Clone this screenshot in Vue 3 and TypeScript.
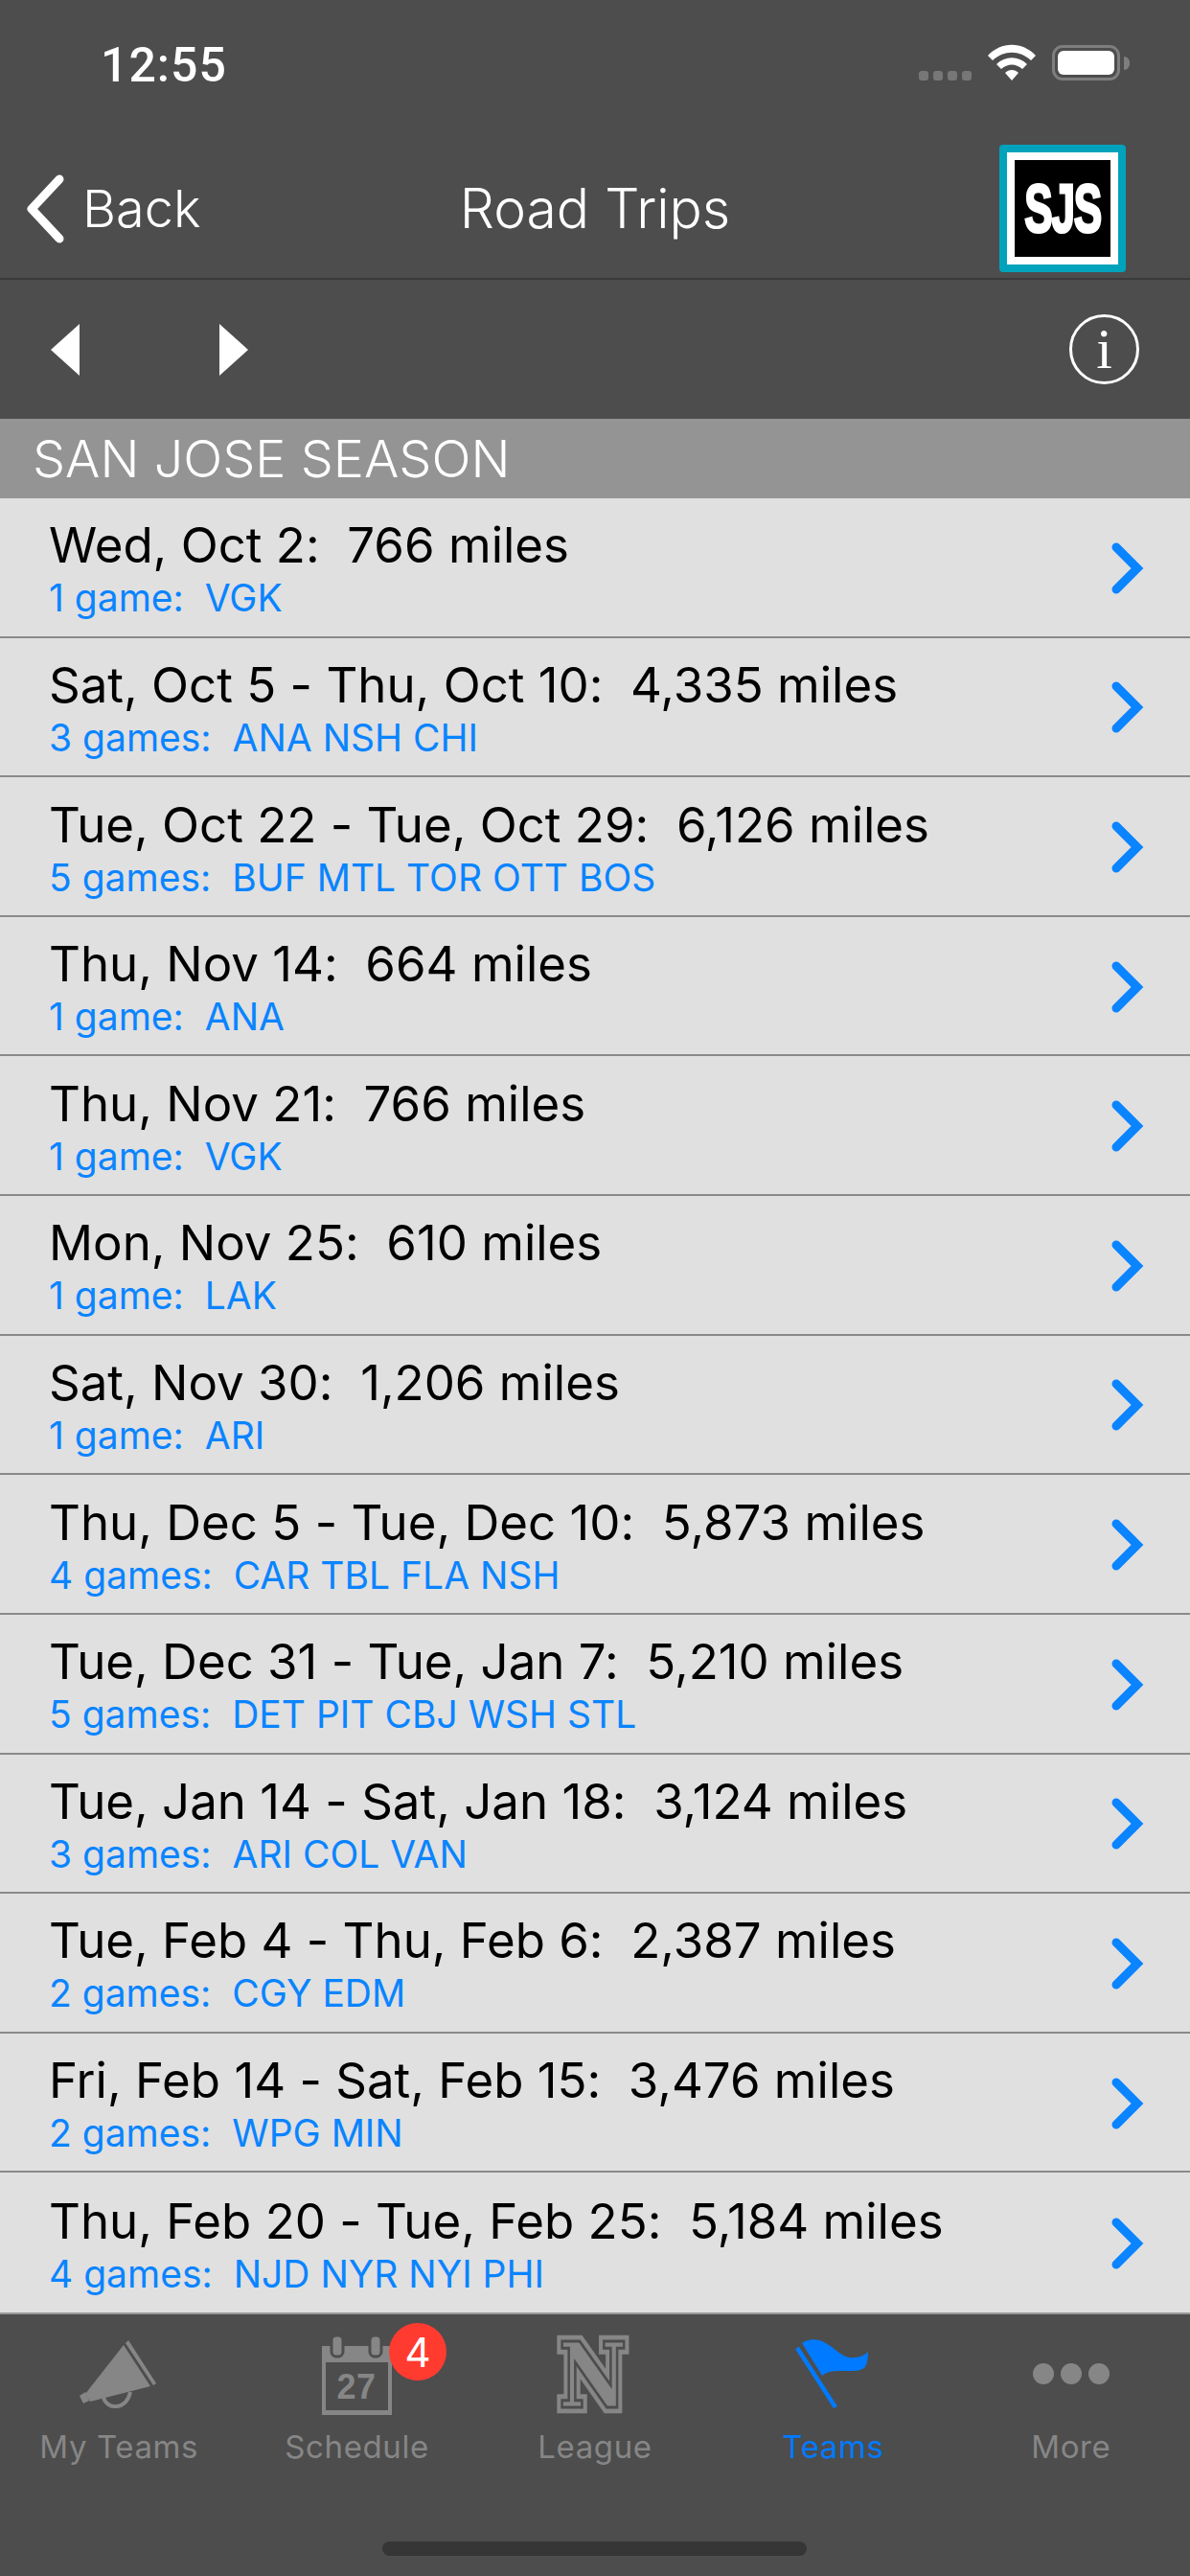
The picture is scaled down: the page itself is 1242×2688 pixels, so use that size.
<script setup lang="ts">
interface Trip {
  title: string;
  sub: string;
}

const trips: Trip[] = [
  { title: 'Wed, Oct 2:  766 miles', sub: '1 game:  VGK' },
  { title: 'Sat, Oct 5 - Thu, Oct 10:  4,335 miles', sub: '3 games:  ANA NSH CHI' },
  { title: 'Tue, Oct 22 - Tue, Oct 29:  6,126 miles', sub: '5 games:  BUF MTL TOR OTT BOS' },
  { title: 'Thu, Nov 14:  664 miles', sub: '1 game:  ANA' },
  { title: 'Thu, Nov 21:  766 miles', sub: '1 game:  VGK' },
  { title: 'Mon, Nov 25:  610 miles', sub: '1 game:  LAK' },
  { title: 'Sat, Nov 30:  1,206 miles', sub: '1 game:  ARI' },
  { title: 'Thu, Dec 5 - Tue, Dec 10:  5,873 miles', sub: '4 games:  CAR TBL FLA NSH' },
  { title: 'Tue, Dec 31 - Tue, Jan 7:  5,210 miles', sub: '5 games:  DET PIT CBJ WSH STL' },
  { title: 'Tue, Jan 14 - Sat, Jan 18:  3,124 miles', sub: '3 games:  ARI COL VAN' },
  { title: 'Tue, Feb 4 - Thu, Feb 6:  2,387 miles', sub: '2 games:  CGY EDM' },
  { title: 'Fri, Feb 14 - Sat, Feb 15:  3,476 miles', sub: '2 games:  WPG MIN' },
  { title: 'Thu, Feb 20 - Tue, Feb 25:  5,184 miles', sub: '4 games:  NJD NYR NYI PHI' },
];
</script>

<template>
  <div class="phone">
    <header class="status">
      <span class="time">12:55</span>
      <div class="status-icons">
        <div class="signal"><i></i><i></i><i></i><i></i></div>
        <svg class="wifi" width="50" height="38" viewBox="0 0 50 38">
          <path d="M0 12 C14 -3 36 -3 50 12 L45 17 C33 6 17 6 5 17 Z" fill="#fff" />
          <path d="M9 21 C18 12 32 12 41 21 L36 26 C29 20 21 20 14 26 Z" fill="#fff" />
          <path d="M18 30 C22 26 28 26 32 30 L25 38 Z" fill="#fff" />
        </svg>
        <div class="battery"><div class="battery-fill"></div></div>
        <div class="battery-cap"></div>
      </div>
    </header>

    <nav class="navbar">
      <div class="back">
        <svg width="44" height="74" viewBox="0 0 44 74">
          <path d="M36 6 L7 37 L36 68" fill="none" stroke="#fff" stroke-width="9" stroke-linecap="round" stroke-linejoin="round" />
        </svg>
        <span>Back</span>
      </div>
      <div class="title">Road Trips</div>
      <div class="logo"><div class="logo-inner"><span>SJS</span></div></div>
    </nav>

    <div class="toolbar">
      <div class="arrows">
        <svg width="30" height="54" viewBox="0 0 30 54"><path d="M30 0 V54 L0 27 Z" fill="#fff" /></svg>
        <svg width="30" height="54" viewBox="0 0 30 54"><path d="M0 0 V54 L30 27 Z" fill="#fff" /></svg>
      </div>
      <div class="info">i</div>
    </div>

    <div class="section">SAN JOSE SEASON</div>

    <ul class="list">
      <li v-for="trip in trips" :key="trip.title" class="row">
        <div class="row-text">
          <div class="row-title">{{ trip.title }}</div>
          <div class="row-sub">{{ trip.sub }}</div>
        </div>
        <svg class="chev" width="36" height="56" viewBox="0 0 36 56">
          <path d="M6 6 L28 28 L6 50" fill="none" stroke="#0a84ff" stroke-width="9" stroke-linecap="round" stroke-linejoin="miter" />
        </svg>
      </li>
    </ul>

    <footer class="tabbar">
      <div class="tab">
        <svg class="tab-icon" width="110" height="90" viewBox="70 2430 110 90">
          <path d="M90 2497 L130 2446 L158 2489 L95 2505 Z" fill="#868686" />
          <path d="M132 2444 L135 2441 L164 2486 L161 2488 Z" fill="#868686" />
          <path d="M84 2499 L90 2495 L94 2504 L88 2507 Z" fill="#868686" />
          <path d="M109 2501 C113 2514 133 2514 137 2495" fill="none" stroke="#868686" stroke-width="4" />
        </svg>
        <span>My Teams</span>
      </div>
      <div class="tab">
        <svg class="tab-icon" width="110" height="90" viewBox="318 2430 110 90">
          <path d="M336 2447 H409 V2519 H336 Z M340 2464 V2514 H405 V2464 Z" fill="#868686" fill-rule="evenodd" />
          <rect x="346" y="2436" width="12" height="22" rx="5" fill="#868686" stroke="#4d4d4d" stroke-width="3" />
          <rect x="386" y="2436" width="12" height="22" rx="5" fill="#868686" stroke="#4d4d4d" stroke-width="3" />
          <text x="372" y="2502" text-anchor="middle" class="cal-num">27</text>
        </svg>
        <span>Schedule</span>
        <div class="badge">4</div>
      </div>
      <div class="tab">
        <svg class="tab-icon" width="110" height="90" viewBox="566 2430 110 90">
          <defs>
            <text id="league-n" x="0" y="0" text-anchor="middle" class="league-n">N</text>
          </defs>
          <g transform="translate(619 2510) scale(1 1.2)">
            <use href="#league-n" fill="#868686" stroke="#868686" stroke-width="12" />
            <use href="#league-n" fill="#4d4d4d" stroke="#4d4d4d" stroke-width="4" />
            <use href="#league-n" fill="#868686" stroke="#4d4d4d" stroke-width="1" />
          </g>
        </svg>
        <span>League</span>
      </div>
      <div class="tab active">
        <svg class="tab-icon" width="110" height="90" viewBox="814 2430 110 90">
          <path d="M837 2444 C842 2440 850 2439 858 2442 C870 2447 877 2458 887 2459 C895 2460 902 2457 906 2453 C906 2461 905 2466 902 2470 C895 2474 890 2473 883 2473 C875 2473 865 2472 858 2478 Z" fill="#007aff" />
          <path d="M832 2449 L872 2511" fill="none" stroke="#007aff" stroke-width="4.5" />
        </svg>
        <span>Teams</span>
      </div>
      <div class="tab">
        <svg class="tab-icon" width="110" height="90" viewBox="1061 2430 110 90">
          <circle cx="1087" cy="2476" r="11" fill="#868686" />
          <circle cx="1116" cy="2476" r="11" fill="#868686" />
          <circle cx="1145" cy="2476" r="11" fill="#868686" />
        </svg>
        <span>More</span>
      </div>
      <div class="home-bar"></div>
    </footer>
  </div>
</template>

<style>
html,
body {
  margin: 0;
  background: #4d4d4d;
}
</style>

<style scoped>
.phone {
  width: 1242px;
  height: 2688px;
  display: flex;
  flex-direction: column;
  background: #4d4d4d;
  font-family: Inter, "Liberation Sans", sans-serif;
  font-feature-settings: "calt" 0;
  color: #fff;
  overflow: hidden;
}

.status {
  height: 132px;
  display: flex;
  justify-content: space-between;
  padding: 48px 63px 0 105px;
  box-sizing: border-box;
}

.time {
  font-family: Roboto, sans-serif;
  font-size: 50px;
  font-weight: 500;
  line-height: 40px;
  letter-spacing: 1px;
}

.status-icons {
  display: flex;
  align-items: flex-start;
  margin-top: -2px;
}

.signal {
  display: flex;
  gap: 5px;
  margin: 28px 17px 0 0;
}

.signal i {
  width: 10px;
  height: 10px;
  border-radius: 3px;
  background: #777;
}

.wifi {
  margin-right: 17px;
}

.battery {
  width: 71px;
  height: 37px;
  margin-top: 1px;
  box-sizing: border-box;
  border: 3px solid #7e7e7e;
  border-radius: 11px;
  padding: 3px;
}

.battery-fill {
  height: 100%;
  background: #fff;
  border-radius: 6px;
}

.battery-cap {
  width: 6px;
  height: 14px;
  margin: 13px 0 0 4px;
  background: #7e7e7e;
  border-radius: 0 6px 6px 0;
}

.navbar {
  height: 160px;
  display: flex;
  align-items: center;
  justify-content: space-between;
  padding: 13px 67px 0 26px;
  box-sizing: border-box;
  border-bottom: 2px solid #3a3a3a;
  position: relative;
}

.back {
  display: flex;
  align-items: center;
  gap: 16px;
  font-size: 54px;
  font-weight: 350;
}

.title {
  font-size: 57px;
  font-weight: 350;
  position: absolute;
  left: 0;
  right: 0;
  text-align: center;
  pointer-events: none;
}

.logo {
  width: 132px;
  height: 133px;
  box-sizing: border-box;
  border: 8px solid #00a3bb;
  border-radius: 4px;
  background: #fff;
  padding: 8px;
}

.logo-inner {
  width: 100%;
  height: 100%;
  background: #000;
  display: flex;
  align-items: center;
  justify-content: center;
  overflow: hidden;
}

.logo-inner span {
  font-family: "Liberation Sans", sans-serif;
  font-size: 70px;
  font-weight: 700;
  transform: scaleX(0.63);
  -webkit-text-stroke: 3px #fff;
  letter-spacing: -2px;
}

.toolbar {
  height: 145px;
  display: flex;
  align-items: center;
  justify-content: space-between;
  padding: 0 53px;
  box-sizing: border-box;
}

.arrows {
  display: flex;
  gap: 146px;
}

.info {
  width: 73px;
  height: 73px;
  box-sizing: border-box;
  border: 3px solid #fff;
  border-radius: 50%;
  display: flex;
  align-items: center;
  justify-content: center;
  font-family: "Liberation Serif", serif;
  font-size: 60px;
}

.section {
  height: 83px;
  flex: none;
  background: #949494;
  font-size: 54px;
  font-weight: 350;
  line-height: 83px;
  padding-left: 34px;
}

.list {
  list-style: none;
  margin: 0;
  padding: 0;
  height: 1893px;
  flex: none;
  background: #e0e0e0;
  display: grid;
  grid-template-rows: repeat(13, 1fr);
}

.row {
  display: flex;
  align-items: center;
  justify-content: space-between;
  padding: 2px 47px 0 51px;
  border-bottom: 2px solid #8a8a8a;
  box-sizing: border-box;
  min-height: 0;
}

.row:last-child {
  border-bottom: none;
}

.row-title {
  font-size: 51px;
  line-height: 60px;
  color: #000;
  white-space: pre;
}

.row-sub {
  font-size: 39px;
  line-height: 44px;
  margin-top: 3px;
  color: #0a84ff;
  white-space: pre;
}

.tabbar {
  flex: 1;
  display: grid;
  grid-template-columns: repeat(5, 1fr);
  align-items: start;
  border-top: 2px solid #9a9a9a;
  position: relative;
  box-sizing: border-box;
}

.tab {
  display: flex;
  flex-direction: column;
  align-items: center;
  padding-top: 16px;
  font-size: 33px;
  letter-spacing: 0.6px;
  color: #868686;
  position: relative;
}

.tab span {
  line-height: 40px;
  margin-top: 12px;
}

.tab.active {
  color: #007aff;
}

.tab-icon {
  display: block;
}

.cal-num {
  font-family: "Liberation Sans", sans-serif;
  font-size: 36px;
  font-weight: 700;
  fill: #868686;
}

.league-n {
  font-family: "DejaVu Serif", serif;
  font-size: 76px;
  font-weight: 700;
}

.badge {
  position: absolute;
  left: 158px;
  top: 9px;
  width: 60px;
  height: 60px;
  border-radius: 50%;
  background: #ff3b30;
  color: #fff;
  display: flex;
  align-items: center;
  justify-content: center;
  font-size: 42px;
}

.home-bar {
  position: absolute;
  left: 399px;
  top: 237px;
  width: 443px;
  height: 15px;
  border-radius: 8px;
  background: #363636;
}
</style>
